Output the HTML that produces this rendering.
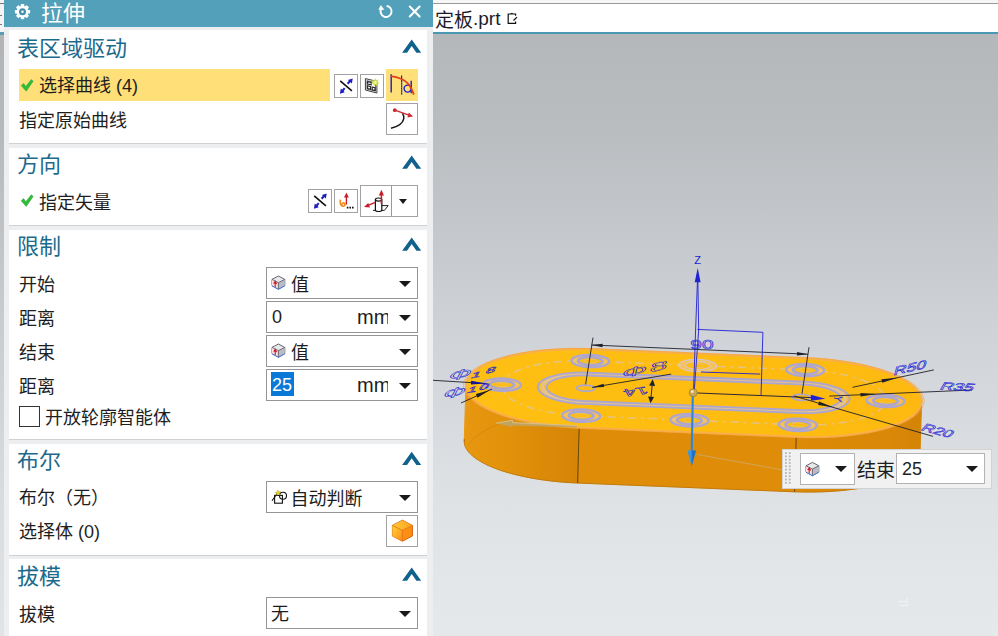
<!DOCTYPE html>
<html lang="zh-CN">
<head>
<meta charset="utf-8">
<title>拉伸</title>
<style>
html,body{margin:0;padding:0;}
body{width:998px;height:636px;overflow:hidden;position:relative;background:#eceff2;
 font-family:"Liberation Sans","Noto Sans CJK SC",sans-serif;color:#1c1c1c;font-size:18px;}
.abs{position:absolute;}
/* left sliver of underlying window */
#sliverTop{left:0;top:0;width:4px;height:32px;background:#f4f4f4;}
#sliverLine{left:0;top:32px;width:4px;height:3px;background:#5a9bb5;}
#sliver{left:0;top:35px;width:4px;height:601px;background:linear-gradient(#b2b4b6 0%,#b5b8ba 14%,#cacdd0 49%,#d9dcdf 77%,#e1e4e6 100%);}
/* dialog */
#dlg{left:4px;top:0;width:429px;height:636px;background:#eceef0;}
#title{left:4px;top:0;width:429px;height:26.5px;background:#53a0ba;color:#fff;}
#title .t{left:37px;top:-2px;font-size:22px;line-height:32px;white-space:nowrap;}
.card{left:9px;width:418px;background:#fff;box-shadow:0 1px 0 #cfd2d5;}
.hd{left:17px;font-size:22px;line-height:30px;color:#1c6a8c;white-space:nowrap;}
.lbl{left:19px;font-size:18px;line-height:26px;white-space:nowrap;color:#1e1e1e;}
.box{left:266px;width:150px;height:30px;border:1px solid #959595;background:#fff;}
.box .v{position:absolute;left:5px;top:2px;font-size:18px;line-height:26px;white-space:nowrap;}
.tri{position:absolute;width:0;height:0;border-left:6px solid transparent;border-right:6px solid transparent;border-top:6px solid #1a1a1a;}
.btn{border:1px solid #a2a2a2;background:#fff;box-sizing:border-box;}
svg{position:absolute;overflow:visible;}
/* viewport */
#tab{left:433px;top:0;width:565px;height:32px;background:#fff;}
#tabTop{left:433px;top:0;width:565px;height:3px;background:#f6f6f6;border-bottom:1px solid #9a9a9a;}
#tabLine{left:433px;top:32px;width:565px;height:2px;background:#4a98b3;}
#tab .t{left:2px;top:5px;font-size:19px;line-height:28px;color:#1b1b2b;white-space:nowrap;}
#view{left:433px;top:34px;width:565px;height:602px;background:linear-gradient(#b5b8ba 0%,#b8bcbf 14%,#cfd2d6 49%,#dee2e5 77%,#e6e9ec 100%);}
</style>
</head>
<body>
<div id="dlg" class="abs"></div>
<div id="sliverTop" class="abs"><div class="abs" style="left:0;top:3px;width:4px;height:1px;background:#777"></div><div class="abs" style="left:0;top:15px;width:2px;height:1px;background:#777"></div><div class="abs" style="left:0;top:24px;width:2px;height:1px;background:#777"></div></div><div id="sliverLine" class="abs"></div><div id="sliver" class="abs"></div>

<!-- title bar -->
<div id="title" class="abs">
 <svg style="left:10px;top:3px" width="17" height="17" viewBox="-8.5 -8.7 17 17">
  <g fill="#fff"><circle r="5.9"/>
  <rect x="-1.8" y="-7.6" width="3.6" height="15.2" rx="0.7"/>
  <rect x="-1.8" y="-7.6" width="3.6" height="15.2" rx="0.7" transform="rotate(45)"/>
  <rect x="-1.8" y="-7.6" width="3.6" height="15.2" rx="0.7" transform="rotate(90)"/>
  <rect x="-1.8" y="-7.6" width="3.6" height="15.2" rx="0.7" transform="rotate(135)"/></g>
  <circle r="3.5" fill="#4391aa"/><circle r="1.2" fill="#fff"/>
 </svg>
 <div class="abs t">拉伸</div>
 <svg style="left:0;top:0" width="429" height="27" viewBox="4 0 429 27">
  <path d="M381.4,8.6 A5.5,5.5 0 1 0 386.6,6" fill="none" stroke="#fff" stroke-width="1.9"/>
  <path d="M378.4,9.8 L380.8,5 L384.4,9.8 Z" fill="#fff"/>
  <path d="M409.8,6.6 L419.6,16.4 M419.6,6.6 L409.8,16.4" stroke="#fff" stroke-width="2.1" fill="none" stroke-linecap="round"/>
 </svg>
</div>

<!-- SECTION 1 -->
<div class="abs card" style="top:30px;height:113px"></div>
<div class="abs hd" style="top:34px">表区域驱动</div>
<div class="abs" style="left:19px;top:69px;width:311px;height:32px;background:#fedf78"></div>
<div class="abs lbl" style="left:39px;top:73px">选择曲线 (4)</div>
<div class="abs lbl" style="top:108px">指定原始曲线</div>
<div class="abs btn" style="left:334px;top:74px;width:24px;height:24px"></div>
<div class="abs btn" style="left:360px;top:74px;width:24px;height:24px"></div>
<div class="abs" style="left:386px;top:69px;width:32px;height:32px;background:#fedf78"></div>
<div class="abs btn" style="left:386px;top:103px;width:32px;height:32px"></div>

<!-- SECTION 2 -->
<div class="abs card" style="top:148px;height:77px"></div>
<div class="abs hd" style="top:150px">方向</div>
<div class="abs lbl" style="left:39px;top:190px">指定矢量</div>
<div class="abs btn" style="left:308px;top:189px;width:24px;height:24px"></div>
<div class="abs btn" style="left:334px;top:189px;width:24px;height:24px"></div>
<div class="abs btn" style="left:360px;top:185px;width:58px;height:32px"></div>
<div class="abs" style="left:391px;top:185px;width:1px;height:32px;background:#9a9a9a"></div>
<div class="tri" style="left:399px;top:199px;border-left-width:4.5px;border-right-width:4.5px;border-top-width:5px"></div>

<!-- SECTION 3 -->
<div class="abs card" style="top:230px;height:209px"></div>
<div class="abs hd" style="top:232px">限制</div>
<div class="abs lbl" style="top:272px">开始</div>
<div class="abs lbl" style="top:306px">距离</div>
<div class="abs lbl" style="top:340px">结束</div>
<div class="abs lbl" style="top:374px">距离</div>
<div class="abs box" style="top:267px"><div class="v" style="left:24px;top:4px">值</div><div class="tri" style="left:132px;top:13px"></div></div>
<div class="abs box" style="top:301px"><div class="v">0</div><div class="v" style="left:90px;width:30.5px;overflow:hidden;font-size:20px">mm</div><div class="tri" style="left:132px;top:13px"></div></div>
<div class="abs box" style="top:335px"><div class="v" style="left:24px;top:4px">值</div><div class="tri" style="left:132px;top:13px"></div></div>
<div class="abs box" style="top:369px"><div class="abs" style="left:4px;top:2px;width:23px;height:23.5px;background:#0a78d6"></div><div class="v" style="color:#fff">25</div><div class="v" style="left:90px;width:30.5px;overflow:hidden;font-size:20px">mm</div><div class="tri" style="left:132px;top:13px"></div></div>
<div class="abs" style="left:19px;top:406px;width:19px;height:19px;border:1.5px solid #333;background:#fff"></div>
<div class="abs lbl" style="left:45px;top:405px">开放轮廓智能体</div>

<!-- SECTION 4 -->
<div class="abs card" style="top:444px;height:111px"></div>
<div class="abs hd" style="top:446px">布尔</div>
<div class="abs lbl" style="top:485px">布尔（无）</div>
<div class="abs lbl" style="top:519px">选择体 (0)</div>
<div class="abs box" style="top:481px"><div class="v" style="left:23.5px;top:4px">自动判断</div><div class="tri" style="left:132px;top:13px"></div></div>
<div class="abs btn" style="left:386px;top:515px;width:32px;height:32px"></div>

<!-- SECTION 5 -->
<div class="abs card" style="top:559px;height:90px"></div>
<div class="abs hd" style="top:562px">拔模</div>
<div class="abs lbl" style="top:602px">拔模</div>
<div class="abs box" style="top:597px"><div class="v" style="left:4px;top:3px">无</div><div class="tri" style="left:132px;top:13px"></div></div>


<!-- ICONS -->
<svg class="abs" style="left:0;top:0" width="433" height="636" viewBox="0 0 433 636">
 <!-- check marks -->
 <path id="ck" d="M21.2,85.6 L23.6,83.4 L25.8,86.6 L31.2,79.6 L33.2,81.2 L26.2,91.2 Z" fill="#2fbe3a" stroke="#27a531" stroke-width="0.5"/>
 <path d="M21.2,200.8 L23.6,198.6 L25.8,201.8 L31.2,194.8 L33.2,196.4 L26.2,206.4 Z" fill="#2fbe3a" stroke="#27a531" stroke-width="0.5"/>
 <!-- chevrons -->
 <g fill="#11628a">
  <path d="M402.1,52.8 L411.7,39.6 L421.2,52.8 L416.4,52.8 L411.7,46.0 L407,52.8 Z"/>
  <path d="M402.1,168.8 L411.7,155.6 L421.2,168.8 L416.4,168.8 L411.7,162.0 L407,168.8 Z"/>
  <path d="M402.1,250.8 L411.7,237.6 L421.2,250.8 L416.4,250.8 L411.7,244.0 L407,250.8 Z"/>
  <path d="M402.1,465.0 L411.7,451.8 L421.2,465.0 L416.4,465.0 L411.7,458.2 L407,465.0 Z"/>
  <path d="M402.1,580.8 L411.7,567.6 L421.2,580.8 L416.4,580.8 L411.7,574.0 L407,580.8 Z"/>
 </g>
 <!-- reverse-direction icon (x2) -->
 <g>
  <path d="M340.2,80.8 L351.9,90.8" stroke="#111" stroke-width="1.6" fill="none"/>
  <path d="M347.6,83.7 L350.6,80.5 M344.7,88.2 L342,91.4" stroke="#1c1cc0" stroke-width="2" fill="none"/>
  <path d="M352.7,78.4 L351.9,83.6 L347.9,80 Z M339.9,93.8 L340.8,88.5 L344.8,92.2 Z" fill="#1c1cc0"/>
 </g>
 <g transform="translate(-26,115)">
  <path d="M340.2,80.8 L351.9,90.8" stroke="#111" stroke-width="1.6" fill="none"/>
  <path d="M347.6,83.7 L350.6,80.5 M344.7,88.2 L342,91.4" stroke="#1c1cc0" stroke-width="2" fill="none"/>
  <path d="M352.7,78.4 L351.9,83.6 L347.9,80 Z M339.9,93.8 L340.8,88.5 L344.8,92.2 Z" fill="#1c1cc0"/>
 </g>
 <!-- sketch section icon -->
 <g fill="none" stroke="#3c3c3c" stroke-width="1">
  <path d="M365.4,78.6 L376.9,81.4 L376.9,93 L365.4,90 Z"/>
  <path d="M366.9,80.6 L375.5,82.8 L375.5,91.2 L366.9,89 Z" stroke-width="0.7"/>
  <path d="M367.6,81.6 L371.2,82.4 L371.2,84.8 L367.6,84 Z M367.6,85.8 L370.6,86.6 L370.6,89.4 L367.6,88.6 Z M372.2,87 L375,87.7 L375,90.5 L372.2,89.8 Z" stroke-width="1.1" stroke="#222"/>
 </g>
 <path d="M375.2,78.4 L376.1,80.6 L378.4,79.8 L377.2,81.9 L379.3,83.1 L377,83.6 L377.3,86 L375.4,84.4 L373.6,86.1 L373.6,83.7 L371.3,83.3 L373.2,81.9 L372,79.9 L374.3,80.6 Z" fill="#d4e64e" stroke="#b4cc30" stroke-width="0.3"/>
 <circle cx="375.3" cy="82.4" r="1.4" fill="#f6f8a0"/>
 <!-- curve select icon (yellow) -->
 <g fill="none">
  <path d="M391.2,74.2 L391.2,92.6" stroke="#1c1cc8" stroke-width="1.4"/>
  <path d="M401.6,75.6 L401.6,94.8" stroke="#1c1cc8" stroke-width="1.2"/>
  <path d="M401.6,82 L401.6,95" stroke="#38c020" stroke-width="1" stroke-dasharray="1.2 1.2"/>
  <circle cx="407.6" cy="88.6" r="3.5" stroke="#1c1cc8" stroke-width="1.4"/>
  <path d="M411.2,80.8 L411.2,93.2" stroke="#1c1cc8" stroke-width="1.4"/>
  <path d="M390.6,76.2 C398,77.2 404,79.4 408,83.6 C410.8,86.6 412.4,90.4 413.8,94.6" stroke="#e0401c" stroke-width="1.8"/>
 </g>
 <!-- specify original curve icon -->
 <g fill="none">
  <path d="M391,128.2 C398,126.6 402.8,123.4 403.8,118.6 C404.2,116.6 403.4,114.8 402.4,113.4" stroke="#151515" stroke-width="1.5"/>
  <path d="M394.8,110.2 L409,115.2" stroke="#d22630" stroke-width="1.4"/>
  <circle cx="394.8" cy="110.2" r="1.9" fill="#d22630"/>
  <path d="M413,116.6 L407.4,117.4 L408.8,112.6 Z" fill="#d22630"/>
 </g>
 <!-- vector dialog icon -->
 <g fill="none">
  <path d="M346.4,204.6 L346.4,196" stroke="#c81e28" stroke-width="1.4"/>
  <path d="M346.4,192.6 L348.8,197.4 L344,197.4 Z" fill="#c81e28"/>
  <path d="M340.4,199.6 C339.6,203.6 341,206.2 343.2,206.2 C345.2,206.2 345.6,203.6 344,203 C342.8,202.6 342,203.6 342.4,204.6" stroke="#f08a1c" stroke-width="1.7"/>
  <path d="M346.8,207.6 h1.6 M349.4,207.6 h1.6 M352,207.6 h1.6" stroke="#111" stroke-width="1.7"/>
 </g>
 <!-- inferred vector icon -->
 <g fill="none">
  <path d="M373,210.4 L384.4,210.4 L388.2,205.6 L381.6,205.6" stroke="#222" stroke-width="1"/>
  <path d="M375.4,199.6 L375.4,210 C375.4,212 381.8,212 381.8,210 L381.8,199.6" stroke="#111" stroke-width="1.2" fill="#fff"/>
  <ellipse cx="378.6" cy="199.6" rx="3.2" ry="1.6" stroke="#111" stroke-width="1.2" fill="#fff"/>
  <path d="M381.4,204 L381.4,194" stroke="#c81e28" stroke-width="1.5"/>
  <path d="M381.4,189.8 L384,195.4 L378.8,195.4 Z" fill="#c81e28"/>
  <path d="M375.4,202.4 L368,205.4" stroke="#c81e28" stroke-width="1.5"/>
  <path d="M364,207 L368.2,203 L370,207.4 Z" fill="#c81e28"/>
 </g>
 <!-- value cube icons -->
 <g id="vcube">
  <path d="M272,279.4 L278.4,276 L284.8,279.4 L284.8,285.6 L278.4,289 L272,285.6 Z" fill="#e9e9ec" stroke="#55555f" stroke-width="0.9"/>
  <path d="M272,279.4 L278.4,282.6 L278.4,289 L272,285.6 Z" fill="#f7dfe2"/>
  <path d="M278.4,282.6 L284.8,279.4 L284.8,285.6 L278.4,289 Z" fill="#b9bcc4"/>
  <path d="M272,279.4 L278.4,282.6 L284.8,279.4 M278.4,282.6 L278.4,289" fill="none" stroke="#55555f" stroke-width="0.8"/>
  <path d="M275.2,287 L275.2,281.6 M273.8,283.6 L275.2,281.4 L276.6,284" stroke="#d01822" stroke-width="1.1" fill="none"/>
  <path d="M272,285.8 L278.4,289.4 L284.8,285.8" stroke="#3f78d0" stroke-width="1" fill="none"/>
 </g>
 <g transform="translate(0,68)">
  <path d="M272,279.4 L278.4,276 L284.8,279.4 L284.8,285.6 L278.4,289 L272,285.6 Z" fill="#e9e9ec" stroke="#55555f" stroke-width="0.9"/>
  <path d="M272,279.4 L278.4,282.6 L278.4,289 L272,285.6 Z" fill="#f7dfe2"/>
  <path d="M278.4,282.6 L284.8,279.4 L284.8,285.6 L278.4,289 Z" fill="#b9bcc4"/>
  <path d="M272,279.4 L278.4,282.6 L284.8,279.4 M278.4,282.6 L278.4,289" fill="none" stroke="#55555f" stroke-width="0.8"/>
  <path d="M275.2,287 L275.2,281.6 M273.8,283.6 L275.2,281.4 L276.6,284" stroke="#d01822" stroke-width="1.1" fill="none"/>
  <path d="M272,285.8 L278.4,289.4 L284.8,285.8" stroke="#3f78d0" stroke-width="1" fill="none"/>
 </g>
 <!-- boolean infer icon -->
 <g fill="none" stroke="#111" stroke-width="1.1">
  <rect x="274.6" y="495.4" width="7.8" height="7.8"/>
  <circle cx="283" cy="495.8" r="3.5"/>
  <path d="M272,500.8 L277.6,493"/>
 </g>
 <path d="M277.8,489.8 L278.6,491.8 L280.8,491.6 L279.2,493.2 L280.2,495.2 L278.2,494.2 L276.6,495.6 L276.8,493.4 L275,492.2 L277.2,491.8 Z" fill="#e8d21e" stroke="#a89a10" stroke-width="0.3"/>
 <!-- body cube -->
 <defs>
  <linearGradient id="cbL" x1="0" y1="0" x2="1" y2="1"><stop offset="0" stop-color="#ffd53a"/><stop offset="1" stop-color="#fb8a12"/></linearGradient>
  <linearGradient id="cbT" x1="0" y1="0" x2="1" y2="0"><stop offset="0" stop-color="#ffc83a"/><stop offset="1" stop-color="#ffa51e"/></linearGradient>
 </defs>
 <path d="M392.4,525.4 L402.4,520.2 L412.4,525.4 L412.4,536 L402.4,541.2 L392.4,536 Z" fill="#fb8f12" stroke="#d9601a" stroke-width="1" stroke-linejoin="round"/>
 <path d="M392.4,525.4 L402.4,520.2 L412.4,525.4 L402.4,530.4 Z" fill="url(#cbT)"/>
 <path d="M392.4,525.4 L402.4,530.4 L402.4,541.2 L392.4,536 Z" fill="url(#cbL)"/>
 <path d="M392.4,525.4 L402.4,530.4 L412.4,525.4 M402.4,530.4 L402.4,541.2" fill="none" stroke="#e2701a" stroke-width="0.8"/>
</svg>

<!-- VIEWPORT -->
<div id="view" class="abs"></div>
<div id="tab" class="abs"><div class="abs t"><span style="position:relative;top:1.5px">定板</span>.prt</div></div>
<div id="tabTop" class="abs"></div>
<svg class="abs" style="left:505px;top:10px" width="16" height="16" viewBox="505 10 16 16">
 <path d="M515.6,15.8 V14 H508.2 V23.4 H515.6 V21.4" fill="none" stroke="#111" stroke-width="1.2"/>
 <path d="M510.2,13.9 L511.8,12.7 L513.4,13.9 Z" fill="#111"/>
 <path d="M517,17.1 L513.5,20.5" stroke="#111" stroke-width="1.3" fill="none"/>
</svg>
<div id="tabLine" class="abs"></div>

<svg class="abs" style="left:0;top:0" width="998" height="636" viewBox="0 0 998 636">
<defs>
<linearGradient id="gside" gradientUnits="userSpaceOnUse" x1="464" y1="0" x2="922" y2="0">
<stop offset="0" stop-color="#ea9a12"/><stop offset="0.02" stop-color="#e6950e"/><stop offset="0.10" stop-color="#e2910b"/><stop offset="0.19" stop-color="#da8908"/><stop offset="0.2505" stop-color="#d58506"/>
<stop offset="0.2515" stop-color="#df8d09"/><stop offset="0.723" stop-color="#df8d09"/><stop offset="0.725" stop-color="#dc8a08"/><stop offset="0.93" stop-color="#d98807"/><stop offset="1" stop-color="#d48406"/>
</linearGradient>
<linearGradient id="gtop" gradientUnits="userSpaceOnUse" x1="464" y1="0" x2="922" y2="0">
<stop offset="0" stop-color="#fec013"/><stop offset="0.5" stop-color="#febd10"/><stop offset="1" stop-color="#fdb910"/>
</linearGradient>
<clipPath id="cview"><rect x="433" y="34" width="565" height="602"/></clipPath>
</defs>
<g clip-path="url(#cview)">
<path d="M794.6,491.8 L804.1,492.0 L813.5,492.0 L822.9,491.8 L832.1,491.3 L841.2,490.6 L849.9,489.6 L858.4,488.5 L866.5,487.0 L874.2,485.4 L881.4,483.6 L888.1,481.6 L894.2,479.4 L899.8,477.0 L904.7,474.5 L909.0,471.9 L912.6,469.1 L915.5,466.2 L917.7,463.3 L919.2,460.3 L919.9,457.2 L919.9,454.1 L919.2,451.0 L917.7,447.9 L915.5,444.9 L912.6,441.9 L909.0,438.9 L904.7,436.1 L899.8,433.3 L894.2,430.7 L888.1,428.2 L881.5,425.9 L874.4,423.7 L866.8,421.7 L858.8,419.9 L850.4,418.3 L841.8,416.8 L832.8,415.7 L823.7,414.7 L814.5,414.0 L805.1,413.5 L590.6,404.9 L581.2,404.7 L571.9,404.7 L562.6,404.9 L553.5,405.4 L544.5,406.1 L535.8,407.0 L527.4,408.2 L519.3,409.5 L511.6,411.1 L504.4,412.9 L497.6,414.9 L491.4,417.0 L485.7,419.4 L480.7,421.8 L476.2,424.4 L472.5,427.2 L469.4,430.0 L467.0,432.9 L465.3,435.9 L464.4,439.0 L464.2,442.1 L464.7,445.1 L466.0,448.2 L468.0,451.3 L470.8,454.3 L474.2,457.3 L478.3,460.1 L483.1,462.9 L488.5,465.6 L494.5,468.1 L501.0,470.5 L508.1,472.7 L515.7,474.7 L523.6,476.5 L532.0,478.2 L540.7,479.6 L549.6,480.8 L558.8,481.8 L568.1,482.5 L577.6,483.0 Z" fill="url(#gside)" stroke="url(#gside)" stroke-width="1"/>
<path d="M465.9,386.3 L921.6,402.4 L919.9,457.2 L464.2,442.1 Z" fill="url(#gside)" stroke="url(#gside)" stroke-width="1"/>
<path d="M796.2,436.7 L805.7,437.0 L815.2,437.0 L824.6,436.8 L833.8,436.3 L842.8,435.6 L851.6,434.7 L860.0,433.5 L868.1,432.1 L875.8,430.5 L883.0,428.7 L889.7,426.7 L895.9,424.5 L901.4,422.2 L906.4,419.7 L910.7,417.0 L914.3,414.3 L917.2,411.4 L919.4,408.5 L920.9,405.5 L921.6,402.4 L921.6,399.3 L920.8,396.2 L919.3,393.1 L917.1,390.1 L914.2,387.1 L910.6,384.1 L906.3,381.2 L901.4,378.5 L895.9,375.8 L889.8,373.3 L883.1,371.0 L876.0,368.8 L868.4,366.8 L860.4,364.9 L852.1,363.3 L843.4,361.9 L834.5,360.7 L825.4,359.7 L816.1,358.9 L806.8,358.4 L592.2,349.4 L582.9,349.1 L573.5,349.1 L564.3,349.3 L555.1,349.8 L546.2,350.4 L537.5,351.4 L529.0,352.5 L521.0,353.9 L513.3,355.4 L506.0,357.2 L499.3,359.2 L493.1,361.3 L487.4,363.6 L482.3,366.1 L477.9,368.7 L474.1,371.4 L471.0,374.2 L468.7,377.2 L467.0,380.1 L466.1,383.2 L465.9,386.3 L466.4,389.3 L467.7,392.4 L469.7,395.5 L472.4,398.5 L475.9,401.5 L480.0,404.4 L484.8,407.1 L490.2,409.8 L496.1,412.3 L502.7,414.7 L509.8,417.0 L517.3,419.0 L525.3,420.9 L533.7,422.5 L542.3,424.0 L551.3,425.2 L560.5,426.2 L569.8,427.0 L579.2,427.5 Z" fill="url(#gside)" stroke="url(#gside)" stroke-width="1"/>
<path d="M464.2,442.1 L464.4,439.0 L464.7,445.1 L466.0,448.2 L468.0,451.3 L470.8,454.3 L474.2,457.3 L478.3,460.1 L483.1,462.9 L488.5,465.6 L494.5,468.1 L501.0,470.5 L508.1,472.7 L515.7,474.7 L523.6,476.5 L532.0,478.2 L540.7,479.6 L549.6,480.8 L558.8,481.8 L568.1,482.5 L577.6,483.0 L794.6,491.8 L804.1,492.0 L813.5,492.0 L822.9,491.8 L832.1,491.3 L841.2,490.6 L849.9,489.6 L858.4,488.5 L866.5,487.0 L874.2,485.4 L881.4,483.6 L888.1,481.6 L894.2,479.4 L899.8,477.0 L904.7,474.5 L909.0,471.9 L912.6,469.1 L915.5,466.2 L917.7,463.3 L919.2,460.3 L919.9,457.2" fill="none" stroke="#a8690a" stroke-width="0.9" opacity="0.55"/>
<path d="M468,446 C480,425 520,415 579,410" fill="none" stroke="#c47a08" stroke-width="0.8" opacity="0.5"/>
<path d="M579.2,427.5 L577.6,483.0 M796.2,436.7 L794.6,491.8" stroke="#5a3e0c" stroke-width="0.9" fill="none"/>
<path d="M796.2,436.7 L805.7,437.0 L815.2,437.0 L824.6,436.8 L833.8,436.3 L842.8,435.6 L851.6,434.7 L860.0,433.5 L868.1,432.1 L875.8,430.5 L883.0,428.7 L889.7,426.7 L895.9,424.5 L901.4,422.2 L906.4,419.7 L910.7,417.0 L914.3,414.3 L917.2,411.4 L919.4,408.5 L920.9,405.5 L921.6,402.4 L921.6,399.3 L920.8,396.2 L919.3,393.1 L917.1,390.1 L914.2,387.1 L910.6,384.1 L906.3,381.2 L901.4,378.5 L895.9,375.8 L889.8,373.3 L883.1,371.0 L876.0,368.8 L868.4,366.8 L860.4,364.9 L852.1,363.3 L843.4,361.9 L834.5,360.7 L825.4,359.7 L816.1,358.9 L806.8,358.4 L592.2,349.4 L582.9,349.1 L573.5,349.1 L564.3,349.3 L555.1,349.8 L546.2,350.4 L537.5,351.4 L529.0,352.5 L521.0,353.9 L513.3,355.4 L506.0,357.2 L499.3,359.2 L493.1,361.3 L487.4,363.6 L482.3,366.1 L477.9,368.7 L474.1,371.4 L471.0,374.2 L468.7,377.2 L467.0,380.1 L466.1,383.2 L465.9,386.3 L466.4,389.3 L467.7,392.4 L469.7,395.5 L472.4,398.5 L475.9,401.5 L480.0,404.4 L484.8,407.1 L490.2,409.8 L496.1,412.3 L502.7,414.7 L509.8,417.0 L517.3,419.0 L525.3,420.9 L533.7,422.5 L542.3,424.0 L551.3,425.2 L560.5,426.2 L569.8,427.0 L579.2,427.5 Z" fill="url(#gtop)" stroke="#f9b04a" stroke-width="2.2"/>
<path d="M796.1,437.5 L805.8,437.8 L815.5,437.8 L825.0,437.6 L834.4,437.1 L843.6,436.4 L852.6,435.4 L861.2,434.2 L869.5,432.8 L877.3,431.2 L884.7,429.3 L891.5,427.3 L897.8,425.1 L903.4,422.7 L908.5,420.1 L912.9,417.4 L916.5,414.6 L919.5,411.7 L921.8,408.7 L923.2,405.6 L924.0,402.5 L924.0,399.3 L923.2,396.2 L921.7,393.0 L919.4,389.9 L916.5,386.8 L912.8,383.8 L908.4,380.9 L903.4,378.1 L897.8,375.4 L891.5,372.9 L884.8,370.5 L877.5,368.2 L869.7,366.2 L861.6,364.3 L853.1,362.6 L844.2,361.2 L835.1,359.9 L825.9,358.9 L816.4,358.2 L806.9,357.7 L592.4,348.6 L582.8,348.4 L573.3,348.3 L563.8,348.5 L554.5,349.0 L545.4,349.7 L536.5,350.6 L527.9,351.8 L519.7,353.2 L511.8,354.8 L504.4,356.6 L497.6,358.6 L491.2,360.8 L485.4,363.1 L480.3,365.6 L475.7,368.3 L471.9,371.1 L468.8,374.0 L466.3,376.9 L464.6,380.0 L463.7,383.1 L463.5,386.2 L464.0,389.4 L465.3,392.5 L467.4,395.6 L470.2,398.7 L473.7,401.7 L477.9,404.7 L482.7,407.5 L488.2,410.2 L494.4,412.8 L501.0,415.3 L508.3,417.5 L516.0,419.6 L524.1,421.5 L532.6,423.2 L541.5,424.7 L550.6,425.9 L560.0,427.0 L569.5,427.7 L579.1,428.3 Z" fill="none" stroke="#f6a43a" stroke-width="0.8" opacity="0.8"/>
<g fill="none" stroke="#aca6d0" stroke-width="1.9" stroke-linejoin="round">
<path d="M799.6,411.5 L803.0,411.6 L806.5,411.6 L809.8,411.6 L813.2,411.4 L816.4,411.1 L819.6,410.8 L822.6,410.4 L825.6,409.9 L828.3,409.3 L830.9,408.7 L833.4,407.9 L835.6,407.2 L837.6,406.3 L839.4,405.4 L841.0,404.4 L842.3,403.5 L843.4,402.4 L844.2,401.4 L844.7,400.3 L845.0,399.2 L845.0,398.0 L844.7,396.9 L844.2,395.8 L843.4,394.7 L842.4,393.6 L841.1,392.5 L839.5,391.5 L837.8,390.5 L835.8,389.5 L833.6,388.6 L831.2,387.8 L828.6,387.0 L825.8,386.2 L822.9,385.6 L819.9,385.0 L816.7,384.5 L813.5,384.0 L810.2,383.7 L806.8,383.4 L803.4,383.2 L588.1,374.1 L584.7,374.0 L581.3,374.0 L578.0,374.1 L574.6,374.3 L571.4,374.5 L568.2,374.8 L565.2,375.3 L562.2,375.7 L559.4,376.3 L556.8,377.0 L554.4,377.7 L552.1,378.5 L550.1,379.3 L548.2,380.2 L546.7,381.1 L545.3,382.1 L544.2,383.2 L543.3,384.2 L542.7,385.3 L542.4,386.4 L542.4,387.5 L542.6,388.6 L543.0,389.8 L543.8,390.9 L544.8,391.9 L546.0,393.0 L547.5,394.1 L549.3,395.1 L551.2,396.0 L553.4,396.9 L555.8,397.8 L558.3,398.6 L561.1,399.3 L563.9,400.0 L567.0,400.6 L570.1,401.1 L573.3,401.6 L576.6,401.9 L580.0,402.2 L583.4,402.4 Z" stroke="#d9c6c0" stroke-width="3.6" opacity="0.7"/>
<path d="M799.4,413.0 L803.2,413.1 L807.0,413.1 L810.7,413.1 L814.4,412.9 L818.0,412.6 L821.5,412.2 L824.9,411.8 L828.1,411.2 L831.2,410.6 L834.0,409.8 L836.7,409.1 L839.2,408.2 L841.4,407.2 L843.4,406.2 L845.1,405.2 L846.6,404.1 L847.7,403.0 L848.6,401.8 L849.2,400.6 L849.5,399.4 L849.6,398.1 L849.3,396.9 L848.7,395.6 L847.8,394.4 L846.7,393.2 L845.2,392.0 L843.5,390.9 L841.6,389.8 L839.4,388.7 L836.9,387.7 L834.3,386.8 L831.4,385.9 L828.4,385.1 L825.2,384.3 L821.8,383.7 L818.3,383.1 L814.8,382.6 L811.1,382.2 L807.4,381.9 L803.6,381.7 L588.4,372.7 L584.6,372.5 L580.9,372.5 L577.1,372.6 L573.5,372.8 L569.9,373.1 L566.4,373.4 L563.0,373.9 L559.8,374.4 L556.7,375.1 L553.8,375.8 L551.1,376.6 L548.6,377.4 L546.3,378.4 L544.3,379.4 L542.5,380.4 L541.1,381.5 L539.8,382.6 L538.9,383.8 L538.2,385.0 L537.9,386.2 L537.8,387.4 L538.0,388.7 L538.6,389.9 L539.4,391.1 L540.5,392.3 L541.9,393.5 L543.5,394.7 L545.4,395.8 L547.6,396.8 L550.0,397.9 L552.6,398.8 L555.4,399.7 L558.5,400.5 L561.7,401.2 L565.0,401.9 L568.4,402.5 L572.0,403.0 L575.7,403.4 L579.4,403.7 L583.2,403.9 Z"/>
<path d="M799.8,410.1 L802.9,410.2 L806.0,410.2 L809.0,410.1 L812.0,410.0 L814.9,409.8 L817.8,409.5 L820.5,409.1 L823.2,408.6 L825.7,408.1 L828.0,407.5 L830.2,406.9 L832.2,406.2 L834.0,405.4 L835.6,404.6 L837.1,403.7 L838.2,402.8 L839.2,401.9 L839.9,401.0 L840.4,400.0 L840.7,399.0 L840.7,398.0 L840.4,397.0 L840.0,396.0 L839.3,395.0 L838.3,394.0 L837.1,393.0 L835.8,392.1 L834.2,391.2 L832.4,390.3 L830.4,389.5 L828.2,388.7 L825.9,388.0 L823.4,387.3 L820.8,386.7 L818.1,386.2 L815.2,385.7 L812.3,385.3 L809.3,385.0 L806.3,384.8 L803.3,384.6 L587.9,375.5 L584.8,375.4 L581.8,375.4 L578.7,375.5 L575.7,375.6 L572.8,375.9 L570.0,376.2 L567.2,376.5 L564.6,377.0 L562.1,377.5 L559.7,378.1 L557.5,378.7 L555.5,379.4 L553.6,380.2 L552.0,381.0 L550.5,381.8 L549.3,382.7 L548.3,383.7 L547.6,384.6 L547.0,385.6 L546.7,386.6 L546.7,387.6 L546.9,388.6 L547.3,389.6 L548.0,390.6 L548.9,391.6 L550.0,392.5 L551.3,393.5 L552.9,394.4 L554.7,395.2 L556.6,396.1 L558.8,396.8 L561.1,397.6 L563.5,398.2 L566.1,398.8 L568.8,399.4 L571.7,399.8 L574.6,400.2 L577.5,400.6 L580.6,400.8 L583.6,401.0 Z"/>
<path d="M797.8,424.8 L804.5,425.0 L811.1,425.0 L817.6,424.9 L824.1,424.6 L830.4,424.1 L836.5,423.4 L842.4,422.6 L848.1,421.7 L853.5,420.5 L858.5,419.3 L863.2,417.9 L867.5,416.3 L871.4,414.7 L874.9,413.0 L877.9,411.1 L880.4,409.2 L882.5,407.2 L884.0,405.1 L885.0,403.0 L885.6,400.9 L885.6,398.7 L885.0,396.5 L884.0,394.4 L882.5,392.2 L880.5,390.1 L877.9,388.1 L874.9,386.1 L871.5,384.1 L867.6,382.3 L863.4,380.5 L858.7,378.9 L853.7,377.3 L848.4,375.9 L842.8,374.6 L837.0,373.5 L830.9,372.5 L824.6,371.6 L818.3,370.9 L811.8,370.4 L805.2,370.1 L590.3,361.0 L583.7,360.8 L577.2,360.8 L570.7,360.9 L564.3,361.3 L558.0,361.7 L551.9,362.4 L546.0,363.2 L540.3,364.1 L535.0,365.2 L529.9,366.5 L525.2,367.9 L520.8,369.4 L516.8,371.0 L513.3,372.7 L510.2,374.5 L507.6,376.4 L505.4,378.4 L503.8,380.5 L502.6,382.6 L502.0,384.7 L501.8,386.8 L502.2,389.0 L503.1,391.2 L504.6,393.3 L506.5,395.4 L508.9,397.5 L511.8,399.5 L515.1,401.5 L518.9,403.3 L523.1,405.1 L527.7,406.8 L532.6,408.3 L537.9,409.7 L543.5,411.0 L549.3,412.2 L555.4,413.2 L561.7,414.1 L568.1,414.8 L574.6,415.3 L581.2,415.7 Z" stroke-dasharray="8 5 2.5 5" stroke="#d9c8b4" stroke-width="1.5" opacity="0.7"/>
<path d="M609.2,361.8 L609.0,360.6 L608.1,359.4 L606.5,358.3 L604.3,357.3 L601.6,356.4 L598.5,355.7 L595.0,355.2 L591.3,354.9 L587.6,354.9 L584.0,355.1 L580.7,355.5 L577.7,356.1 L575.2,357.0 L573.3,357.9 L572.0,359.0 L571.5,360.2 L571.6,361.4 L572.5,362.6 L574.1,363.8 L576.2,364.8 L579.0,365.7 L582.1,366.4 L585.6,366.9 L589.3,367.1 L593.0,367.2 L596.6,367.0 L599.9,366.5 L602.9,365.9 L605.4,365.1 L607.3,364.1 L608.6,363.0 Z" fill="#f3c48a" fill-opacity="0.55" stroke="#aca6d0" stroke-width="2.3"/>
<path d="M602.5,361.5 L602.4,360.7 L601.8,360.0 L600.8,359.2 L599.4,358.6 L597.6,358.0 L595.6,357.6 L593.3,357.2 L591.0,357.1 L588.6,357.0 L586.3,357.2 L584.1,357.5 L582.2,357.9 L580.6,358.4 L579.3,359.0 L578.5,359.7 L578.1,360.5 L578.2,361.3 L578.8,362.1 L579.8,362.8 L581.2,363.4 L583.0,364.0 L585.0,364.5 L587.3,364.8 L589.6,365.0 L592.0,365.0 L594.4,364.9 L596.5,364.6 L598.4,364.2 L600.1,363.6 L601.3,363.0 L602.1,362.3 Z" fill="#febd10" stroke="#aca6d0" stroke-width="2.6"/>
<path d="M596.5,361.3 L596.5,360.9 L596.2,360.5 L595.6,360.1 L594.9,359.8 L594.0,359.5 L593.0,359.3 L591.8,359.1 L590.6,359.0 L589.4,359.0 L588.2,359.1 L587.1,359.2 L586.2,359.4 L585.3,359.7 L584.7,360.0 L584.3,360.4 L584.1,360.8 L584.2,361.2 L584.4,361.5 L585.0,361.9 L585.7,362.3 L586.6,362.5 L587.6,362.8 L588.8,362.9 L590.0,363.0 L591.2,363.0 L592.4,363.0 L593.5,362.8 L594.5,362.6 L595.3,362.4 L595.9,362.0 L596.3,361.7 Z" stroke-width="0.9" stroke="#e5c27a"/>
<path d="M716.6,366.3 L716.4,365.1 L715.5,363.9 L713.9,362.8 L711.7,361.8 L708.9,360.9 L705.8,360.2 L702.3,359.7 L698.6,359.4 L694.9,359.4 L691.3,359.6 L688.0,360.0 L685.0,360.6 L682.5,361.5 L680.6,362.5 L679.4,363.6 L678.8,364.7 L679.0,366.0 L679.9,367.1 L681.5,368.3 L683.7,369.3 L686.5,370.2 L689.6,370.9 L693.1,371.4 L696.8,371.7 L700.5,371.7 L704.1,371.5 L707.4,371.1 L710.4,370.4 L712.9,369.6 L714.8,368.6 L716.0,367.5 Z" fill="#f3c48a" fill-opacity="0.55" stroke="#d9c7c0" stroke-width="1.3"/>
<path d="M709.9,366.0 L709.8,365.3 L709.2,364.5 L708.2,363.8 L706.7,363.1 L705.0,362.5 L702.9,362.1 L700.7,361.8 L698.3,361.6 L695.9,361.6 L693.6,361.7 L691.4,362.0 L689.5,362.4 L687.9,362.9 L686.7,363.5 L685.9,364.3 L685.5,365.0 L685.6,365.8 L686.2,366.6 L687.2,367.3 L688.7,368.0 L690.4,368.5 L692.5,369.0 L694.7,369.3 L697.1,369.5 L699.5,369.5 L701.8,369.4 L704.0,369.1 L705.9,368.7 L707.5,368.2 L708.7,367.5 L709.5,366.8 Z" fill="#febd10" stroke="#d9c7c0" stroke-width="1.3"/>
<path d="M703.9,365.8 L703.9,365.4 L703.6,365.0 L703.0,364.6 L702.3,364.3 L701.4,364.0 L700.4,363.8 L699.2,363.6 L698.0,363.5 L696.8,363.5 L695.6,363.6 L694.5,363.7 L693.5,363.9 L692.7,364.2 L692.1,364.5 L691.7,364.9 L691.5,365.3 L691.6,365.7 L691.9,366.1 L692.4,366.4 L693.1,366.8 L694.0,367.1 L695.1,367.3 L696.2,367.5 L697.4,367.6 L698.6,367.6 L699.8,367.5 L700.9,367.4 L701.9,367.1 L702.7,366.9 L703.3,366.5 L703.7,366.2 Z" stroke-width="0.9" stroke="#e5c27a"/>
<path d="M824.1,370.9 L823.9,369.6 L823.0,368.4 L821.4,367.3 L819.1,366.3 L816.4,365.4 L813.2,364.7 L809.7,364.2 L806.0,363.9 L802.3,363.9 L798.8,364.1 L795.4,364.5 L792.5,365.2 L790.0,366.0 L788.1,367.0 L786.9,368.1 L786.3,369.3 L786.5,370.5 L787.4,371.7 L789.0,372.8 L791.3,373.8 L794.0,374.7 L797.2,375.4 L800.7,375.9 L804.4,376.2 L808.1,376.2 L811.7,376.0 L815.0,375.6 L818.0,375.0 L820.5,374.1 L822.3,373.1 L823.6,372.0 Z" fill="#f3c48a" fill-opacity="0.55" stroke="#aca6d0" stroke-width="2.3"/>
<path d="M817.4,370.6 L817.3,369.8 L816.7,369.0 L815.6,368.3 L814.2,367.6 L812.4,367.1 L810.4,366.6 L808.1,366.3 L805.7,366.1 L803.4,366.1 L801.0,366.2 L798.9,366.5 L797.0,366.9 L795.4,367.4 L794.2,368.1 L793.4,368.8 L793.0,369.5 L793.2,370.3 L793.7,371.1 L794.8,371.8 L796.2,372.5 L798.0,373.1 L800.1,373.5 L802.3,373.8 L804.7,374.0 L807.1,374.0 L809.4,373.9 L811.5,373.6 L813.5,373.2 L815.1,372.7 L816.3,372.0 L817.1,371.3 Z" fill="#febd10" stroke="#aca6d0" stroke-width="2.6"/>
<path d="M811.4,370.3 L811.4,369.9 L811.1,369.5 L810.5,369.2 L809.8,368.8 L808.9,368.5 L807.8,368.3 L806.7,368.1 L805.5,368.0 L804.3,368.0 L803.1,368.1 L802.0,368.2 L801.0,368.4 L800.2,368.7 L799.6,369.0 L799.2,369.4 L799.0,369.8 L799.1,370.2 L799.4,370.6 L799.9,371.0 L800.6,371.3 L801.5,371.6 L802.6,371.8 L803.7,372.0 L804.9,372.1 L806.2,372.1 L807.3,372.0 L808.4,371.9 L809.4,371.7 L810.2,371.4 L810.9,371.1 L811.3,370.7 Z" stroke-width="0.9" stroke="#e5c27a"/>
<path d="M600.2,416.5 L600.0,415.2 L599.1,414.0 L597.6,412.9 L595.4,411.8 L592.6,410.9 L589.4,410.2 L585.9,409.7 L582.2,409.5 L578.5,409.4 L574.9,409.6 L571.5,410.1 L568.5,410.7 L566.0,411.5 L564.0,412.5 L562.8,413.7 L562.2,414.9 L562.4,416.1 L563.2,417.3 L564.8,418.4 L567.0,419.5 L569.8,420.4 L573.0,421.1 L576.5,421.6 L580.2,421.9 L583.9,421.9 L587.5,421.7 L590.9,421.3 L593.9,420.6 L596.4,419.8 L598.4,418.8 L599.6,417.7 Z" fill="#f3c48a" fill-opacity="0.55" stroke="#aca6d0" stroke-width="2.3"/>
<path d="M593.5,416.2 L593.4,415.4 L592.8,414.6 L591.8,413.9 L590.3,413.2 L588.6,412.6 L586.5,412.2 L584.2,411.8 L581.9,411.7 L579.5,411.6 L577.1,411.8 L574.9,412.0 L573.0,412.5 L571.4,413.0 L570.1,413.6 L569.3,414.4 L568.9,415.1 L569.0,415.9 L569.6,416.7 L570.6,417.5 L572.0,418.1 L573.8,418.7 L575.9,419.2 L578.1,419.5 L580.5,419.7 L582.9,419.7 L585.3,419.6 L587.5,419.3 L589.4,418.9 L591.0,418.3 L592.3,417.7 L593.1,417.0 Z" fill="#febd10" stroke="#aca6d0" stroke-width="2.6"/>
<path d="M587.4,415.9 L587.4,415.5 L587.1,415.1 L586.6,414.7 L585.9,414.4 L584.9,414.1 L583.9,413.9 L582.7,413.7 L581.5,413.6 L580.3,413.6 L579.1,413.7 L578.0,413.8 L577.0,414.0 L576.2,414.3 L575.5,414.6 L575.1,415.0 L574.9,415.4 L575.0,415.8 L575.3,416.2 L575.8,416.6 L576.5,416.9 L577.4,417.2 L578.5,417.5 L579.6,417.6 L580.9,417.7 L582.1,417.7 L583.3,417.7 L584.4,417.5 L585.4,417.3 L586.2,417.0 L586.8,416.7 L587.3,416.3 Z" stroke-width="0.9" stroke="#e5c27a"/>
<path d="M708.5,421.0 L708.3,419.8 L707.4,418.6 L705.8,417.5 L703.6,416.4 L700.8,415.5 L697.6,414.8 L694.1,414.3 L690.4,414.0 L686.7,414.0 L683.1,414.2 L679.7,414.6 L676.7,415.3 L674.2,416.1 L672.3,417.1 L671.0,418.2 L670.4,419.4 L670.6,420.7 L671.5,421.9 L673.1,423.0 L675.3,424.1 L678.1,425.0 L681.3,425.7 L684.8,426.2 L688.5,426.5 L692.3,426.5 L695.9,426.3 L699.3,425.9 L702.3,425.2 L704.8,424.4 L706.7,423.4 L707.9,422.2 Z" fill="#f3c48a" fill-opacity="0.55" stroke="#aca6d0" stroke-width="2.3"/>
<path d="M701.7,420.8 L701.6,420.0 L701.0,419.2 L700.0,418.4 L698.6,417.8 L696.8,417.2 L694.7,416.7 L692.4,416.4 L690.1,416.2 L687.7,416.2 L685.3,416.3 L683.1,416.6 L681.2,417.0 L679.6,417.6 L678.4,418.2 L677.5,418.9 L677.2,419.7 L677.3,420.5 L677.9,421.3 L678.9,422.0 L680.3,422.7 L682.1,423.3 L684.2,423.8 L686.5,424.1 L688.9,424.3 L691.3,424.3 L693.6,424.2 L695.8,423.9 L697.7,423.5 L699.3,422.9 L700.6,422.3 L701.4,421.5 Z" fill="#febd10" stroke="#aca6d0" stroke-width="2.6"/>
<path d="M695.7,420.5 L695.7,420.1 L695.4,419.7 L694.8,419.3 L694.1,419.0 L693.2,418.7 L692.1,418.5 L691.0,418.3 L689.8,418.2 L688.5,418.2 L687.4,418.2 L686.2,418.4 L685.3,418.6 L684.4,418.9 L683.8,419.2 L683.4,419.6 L683.2,420.0 L683.3,420.4 L683.6,420.8 L684.1,421.2 L684.8,421.5 L685.7,421.8 L686.8,422.0 L687.9,422.2 L689.2,422.3 L690.4,422.3 L691.6,422.2 L692.7,422.1 L693.7,421.9 L694.5,421.6 L695.1,421.3 L695.5,420.9 Z" stroke-width="0.9" stroke="#e5c27a"/>
<path d="M816.9,425.6 L816.7,424.4 L815.7,423.2 L814.1,422.0 L811.9,421.0 L809.1,420.1 L805.9,419.4 L802.4,418.9 L798.7,418.6 L794.9,418.6 L791.3,418.8 L788.0,419.2 L785.0,419.9 L782.5,420.7 L780.6,421.7 L779.3,422.8 L778.8,424.0 L779.0,425.3 L779.9,426.5 L781.5,427.6 L783.8,428.7 L786.6,429.6 L789.8,430.3 L793.3,430.8 L797.0,431.1 L800.7,431.1 L804.3,430.9 L807.7,430.5 L810.7,429.8 L813.2,429.0 L815.1,428.0 L816.3,426.8 Z" fill="#f3c48a" fill-opacity="0.55" stroke="#aca6d0" stroke-width="2.3"/>
<path d="M810.1,425.3 L810.0,424.6 L809.4,423.8 L808.3,423.0 L806.9,422.3 L805.1,421.8 L803.0,421.3 L800.8,421.0 L798.4,420.8 L796.0,420.8 L793.6,420.9 L791.5,421.2 L789.5,421.6 L787.9,422.2 L786.7,422.8 L785.9,423.5 L785.5,424.3 L785.7,425.1 L786.3,425.9 L787.3,426.6 L788.8,427.3 L790.6,427.9 L792.6,428.3 L794.9,428.7 L797.3,428.9 L799.7,428.9 L802.0,428.7 L804.2,428.5 L806.1,428.0 L807.8,427.5 L809.0,426.8 L809.8,426.1 Z" fill="#febd10" stroke="#aca6d0" stroke-width="2.6"/>
<path d="M804.1,425.1 L804.0,424.7 L803.7,424.3 L803.2,423.9 L802.5,423.6 L801.5,423.3 L800.5,423.0 L799.3,422.9 L798.1,422.8 L796.9,422.8 L795.7,422.8 L794.6,423.0 L793.6,423.2 L792.8,423.5 L792.2,423.8 L791.7,424.2 L791.6,424.6 L791.6,425.0 L791.9,425.4 L792.5,425.7 L793.2,426.1 L794.1,426.4 L795.2,426.6 L796.3,426.8 L797.6,426.9 L798.8,426.9 L800.0,426.8 L801.1,426.7 L802.1,426.5 L802.9,426.2 L803.5,425.9 L803.9,425.5 Z" stroke-width="0.9" stroke="#e5c27a"/>
<path d="M520.9,385.5 L520.7,384.3 L519.9,383.1 L518.3,381.9 L516.1,380.9 L513.4,380.0 L510.2,379.3 L506.7,378.8 L503.1,378.5 L499.4,378.5 L495.8,378.7 L492.4,379.1 L489.4,379.8 L486.9,380.6 L484.9,381.6 L483.6,382.7 L483.1,383.9 L483.2,385.1 L484.1,386.3 L485.6,387.5 L487.8,388.5 L490.5,389.4 L493.7,390.1 L497.2,390.6 L500.9,390.9 L504.6,390.9 L508.2,390.7 L511.6,390.3 L514.6,389.6 L517.1,388.8 L519.0,387.8 L520.3,386.7 Z" fill="#f3c48a" fill-opacity="0.55" stroke="#aca6d0" stroke-width="2.3"/>
<path d="M514.2,385.2 L514.1,384.4 L513.5,383.6 L512.5,382.9 L511.1,382.2 L509.3,381.7 L507.3,381.2 L505.0,380.9 L502.7,380.7 L500.3,380.7 L498.0,380.8 L495.8,381.1 L493.8,381.5 L492.2,382.1 L491.0,382.7 L490.1,383.4 L489.8,384.2 L489.9,385.0 L490.4,385.7 L491.4,386.5 L492.8,387.1 L494.6,387.7 L496.6,388.2 L498.9,388.5 L501.3,388.7 L503.6,388.7 L506.0,388.6 L508.2,388.3 L510.1,387.9 L511.7,387.3 L513.0,386.7 L513.8,386.0 Z" fill="#febd10" stroke="#aca6d0" stroke-width="2.6"/>
<path d="M508.2,385.0 L508.1,384.6 L507.9,384.2 L507.3,383.8 L506.6,383.4 L505.7,383.2 L504.7,382.9 L503.5,382.8 L502.3,382.7 L501.1,382.7 L499.9,382.7 L498.8,382.9 L497.8,383.1 L497.0,383.4 L496.4,383.7 L495.9,384.0 L495.7,384.4 L495.8,384.8 L496.1,385.2 L496.6,385.6 L497.3,385.9 L498.2,386.2 L499.2,386.5 L500.4,386.6 L501.6,386.7 L502.8,386.7 L504.0,386.7 L505.1,386.5 L506.1,386.3 L506.9,386.0 L507.6,385.7 L508.0,385.3 Z" stroke-width="0.9" stroke="#e5c27a"/>
<path d="M904.5,401.7 L904.3,400.5 L903.4,399.2 L901.7,398.1 L899.5,397.1 L896.7,396.2 L893.5,395.5 L890.0,395.0 L886.3,394.7 L882.6,394.7 L879.0,394.9 L875.7,395.3 L872.7,395.9 L870.2,396.8 L868.3,397.8 L867.1,398.9 L866.6,400.1 L866.8,401.3 L867.7,402.5 L869.4,403.6 L871.6,404.7 L874.4,405.6 L877.6,406.3 L881.1,406.8 L884.8,407.1 L888.5,407.1 L892.1,406.9 L895.5,406.5 L898.4,405.8 L900.9,405.0 L902.8,404.0 L904.0,402.9 Z" fill="#f3c48a" fill-opacity="0.55" stroke="#aca6d0" stroke-width="2.3"/>
<path d="M897.8,401.4 L897.7,400.6 L897.1,399.8 L896.0,399.1 L894.6,398.4 L892.8,397.8 L890.7,397.4 L888.4,397.1 L886.0,396.9 L883.7,396.9 L881.3,397.0 L879.2,397.3 L877.2,397.7 L875.7,398.2 L874.4,398.9 L873.6,399.6 L873.3,400.4 L873.5,401.1 L874.1,401.9 L875.1,402.7 L876.6,403.3 L878.3,403.9 L880.4,404.4 L882.7,404.7 L885.1,404.9 L887.5,404.9 L889.8,404.8 L892.0,404.5 L893.9,404.1 L895.5,403.5 L896.7,402.9 L897.5,402.2 Z" fill="#febd10" stroke="#aca6d0" stroke-width="2.6"/>
<path d="M891.8,401.1 L891.7,400.7 L891.4,400.3 L890.9,400.0 L890.2,399.6 L889.2,399.3 L888.2,399.1 L887.0,398.9 L885.8,398.8 L884.6,398.8 L883.4,398.9 L882.3,399.0 L881.3,399.2 L880.5,399.5 L879.9,399.9 L879.5,400.2 L879.3,400.6 L879.4,401.0 L879.7,401.4 L880.2,401.8 L881.0,402.1 L881.9,402.4 L882.9,402.7 L884.1,402.8 L885.3,402.9 L886.5,402.9 L887.7,402.9 L888.8,402.7 L889.8,402.5 L890.6,402.2 L891.2,401.9 L891.6,401.5 Z" stroke-width="0.9" stroke="#e5c27a"/>
<path d="M594.9,388.6 L594.8,388.0 L594.4,387.4 L593.6,386.9 L592.5,386.4 L591.2,386.0 L589.7,385.6 L588.0,385.4 L586.3,385.3 L584.5,385.2 L582.7,385.3 L581.1,385.6 L579.7,385.9 L578.5,386.3 L577.5,386.7 L576.9,387.3 L576.7,387.8 L576.7,388.4 L577.2,389.0 L577.9,389.6 L579.0,390.1 L580.3,390.5 L581.8,390.8 L583.5,391.1 L585.3,391.2 L587.1,391.2 L588.8,391.1 L590.4,390.9 L591.9,390.6 L593.1,390.2 L594.0,389.7 L594.6,389.2 Z" stroke-width="1.7"/>
<path d="M810.7,397.7 L810.6,397.1 L810.1,396.5 L809.3,396.0 L808.3,395.5 L806.9,395.1 L805.4,394.7 L803.7,394.5 L801.9,394.4 L800.2,394.3 L798.4,394.4 L796.8,394.6 L795.4,395.0 L794.2,395.4 L793.3,395.8 L792.7,396.4 L792.4,396.9 L792.5,397.5 L793.0,398.1 L793.7,398.7 L794.8,399.2 L796.1,399.6 L797.7,399.9 L799.4,400.2 L801.1,400.3 L802.9,400.3 L804.7,400.2 L806.3,400.0 L807.7,399.7 L808.9,399.3 L809.8,398.8 L810.4,398.3 Z" stroke-width="1.7"/>
</g>
<path d="M496,423.2 L512.5,420.2 L512.5,422.6 L577,425.6 L577,427.4 L512.5,425.6 L512.5,427 Z" fill="#c2a462"/>
<path d="M496,423.2 L512.5,420.2 L512.5,422.6 L577,425.6" fill="none" stroke="#dcc894" stroke-width="0.8"/>
<g stroke="#20202a" stroke-width="0.9" fill="none">
<path d="M593,337.6 L585.6,384.4 M809,347.2 L802,393.7"/>
<path d="M591.6,345 L808,354.2"/>
<path d="M592,387.4 L671.2,374.1"/>
<path d="M652.6,381 L650.6,401.5"/>
<path d="M433,380.3 L487,383.6"/>
<path d="M461,403 L492,389"/>
<path d="M852.6,387.3 L933.8,369.9"/>
<path d="M829.3,396.1 L972,390"/>
<path d="M794,396 L933,436.4"/>
<path d="M697.4,393 L811,397.6" stroke="#15153a"/>
</g>
<path d="M591.6,345.0 L602.5,347.2 L602.7,343.8 Z" fill="#20202a"/>
<path d="M808.0,354.2 L797.1,352.0 L796.9,355.4 Z" fill="#20202a"/>
<path d="M652.7,379.2 L649.1,385.4 L655.1,385.9 Z" fill="#20202a"/>
<path d="M650.5,403.2 L654.1,397.0 L648.1,396.5 Z" fill="#20202a"/>
<path d="M592.0,387.4 L604.1,387.0 L603.6,383.8 Z" fill="#20202a"/>
<path d="M486.0,383.5 L471.1,380.8 L470.9,384.4 Z" fill="#15159a"/>
<path d="M489.5,390.2 L475.9,394.1 L477.5,397.8 Z" fill="#20202a"/>
<path d="M897.5,377.7 L881.5,379.3 L882.2,382.8 Z" fill="#20202a"/>
<path d="M876.5,394.1 L860.4,393.0 L860.6,396.6 Z" fill="#20202a"/>
<path d="M833.0,407.3 L819.1,401.4 L818.1,404.9 Z" fill="#20202a"/>
<g stroke="#2020d4" stroke-width="0.9" fill="none">
<path d="M697.4,329.4 L762.9,332.3 L761,395.8"/>
<path d="M701,372 L760.2,374.1"/>
<path d="M697.4,282 L695.6,330 L693.6,389 M697.9,282 L698.7,330 L694.4,389"/>
</g>
<path d="M697.7,268 L700.6,282.2 L694.7,282.2 Z" fill="#2020d4"/>
<path d="M810.9,394.8 L825.5,398.8 L811,400.8 Z" fill="#2020d4"/>
<g font-family="Liberation Sans, sans-serif" fill="none" stroke="#2020d4" stroke-width="0.75">
<text x="0" y="0" font-size="11" text-anchor="middle" transform="translate(697.6,264)" fill="#2020d4" stroke="none">Z</text>
<text x="0" y="0" font-size="11" text-anchor="middle" transform="translate(834,398) rotate(100) scale(0.9,1.1)" fill="#2020d4" stroke="none">Y</text>
<text x="0" y="0" font-size="12" text-anchor="middle" transform="translate(702,348.6) scale(1.75,1.05)" stroke-width="0.5">90</text>
<text x="0" y="0" font-size="12" transform="translate(621,378.4) rotate(-12) skewX(-25) scale(2.7,1.0)" stroke-width="0.4" letter-spacing="1">Φ8</text>
<text x="0" y="0" font-size="12" transform="translate(646,386.4) rotate(172) skewX(20) scale(1.8,0.9)" stroke-width="0.5">14</text>
<text x="0" y="0" transform="translate(446.5,381) rotate(-9) skewX(-38) scale(1.9,0.85)" stroke-width="0.5"><tspan font-size="15">Φ</tspan><tspan font-size="9" dx="1" dy="1.5">1</tspan><tspan font-size="9" dx="2" dy="-3">8</tspan></text>
<text x="0" y="0" transform="translate(441,399.5) rotate(-10) skewX(-38) scale(1.9,0.85)" stroke-width="0.5"><tspan font-size="15">Φ</tspan><tspan font-size="9" dx="1" dy="-2">1</tspan><tspan font-size="9" dx="1" dy="-1">0</tspan></text>
<text x="0" y="0" font-size="12" transform="translate(893,375.6) rotate(-13) skewX(-28) scale(1.5,0.95)" stroke-width="0.55">R50</text>
<text x="0" y="0" font-size="12" transform="translate(939,389.6) rotate(3) skewX(-28) scale(1.5,0.9)" stroke-width="0.55">R35</text>
<text x="0" y="0" font-size="12" transform="translate(920,430) rotate(15) skewX(-28) scale(1.4,0.95)" stroke-width="0.55">R20</text>
</g>
<path d="M692.8,396 L691.7,452" stroke="#2f86d6" stroke-width="2.1" fill="none"/>
<path d="M687.4,450.6 L696,450.6 L691.6,466.4 Z" fill="#3a97e6"/>
<path d="M691.7,450.6 L696,450.6 L691.6,466.4 Z" fill="#1f72c4"/>
<circle cx="693.2" cy="392.7" r="4" fill="#c8a858" stroke="#8a6d2a" stroke-width="0.6"/>
<circle cx="692.2" cy="391.4" r="1.5" fill="#f3e4ae"/>
<path d="M697,454.4 L783,470" stroke="#c9b48c" stroke-width="0.8" fill="none" opacity="0.75"/>
<path d="M898,601.5 h8 M900,605.5 h7 M907,598 v8" stroke="#f2f4f5" stroke-width="1.2" fill="none" opacity="0.8"/>
</g>
</svg>
<!-- floating toolbar -->
<div class="abs" style="left:782px;top:449px;width:208px;height:38px;background:#f1f1f1;border:1px solid #d2d2d2;box-sizing:content-box"></div>
<svg class="abs" style="left:784px;top:451px" width="8" height="36" viewBox="0 0 8 36">
 <g fill="#b4b4b4">
 <rect x="1" y="1.2" width="1.8" height="1.8"/><rect x="4.8" y="1.2" width="1.8" height="1.8"/>
 <rect x="1" y="4.5" width="1.8" height="1.8"/><rect x="4.8" y="4.5" width="1.8" height="1.8"/>
 <rect x="1" y="7.8" width="1.8" height="1.8"/><rect x="4.8" y="7.8" width="1.8" height="1.8"/>
 <rect x="1" y="11.1" width="1.8" height="1.8"/><rect x="4.8" y="11.1" width="1.8" height="1.8"/>
 <rect x="1" y="14.4" width="1.8" height="1.8"/><rect x="4.8" y="14.4" width="1.8" height="1.8"/>
 <rect x="1" y="17.7" width="1.8" height="1.8"/><rect x="4.8" y="17.7" width="1.8" height="1.8"/>
 <rect x="1" y="21" width="1.8" height="1.8"/><rect x="4.8" y="21" width="1.8" height="1.8"/>
 <rect x="1" y="24.3" width="1.8" height="1.8"/><rect x="4.8" y="24.3" width="1.8" height="1.8"/>
 <rect x="1" y="27.6" width="1.8" height="1.8"/><rect x="4.8" y="27.6" width="1.8" height="1.8"/>
 <rect x="1" y="30.9" width="1.8" height="1.8"/><rect x="4.8" y="30.9" width="1.8" height="1.8"/>
 </g>
</svg>
<div class="abs" style="left:800px;top:453px;width:53px;height:30px;border:1px solid #b2b2b2;background:#fff"></div>
<div class="tri" style="left:835px;top:466px"></div>
<svg class="abs" style="left:0;top:0" width="998" height="636" viewBox="0 0 998 636"><g transform="translate(534,186.4)">
  <path d="M272,279.4 L278.4,276 L284.8,279.4 L284.8,285.6 L278.4,289 L272,285.6 Z" fill="#e9e9ec" stroke="#55555f" stroke-width="0.9"/>
  <path d="M272,279.4 L278.4,282.6 L278.4,289 L272,285.6 Z" fill="#f7dfe2"/>
  <path d="M278.4,282.6 L284.8,279.4 L284.8,285.6 L278.4,289 Z" fill="#b9bcc4"/>
  <path d="M272,279.4 L278.4,282.6 L284.8,279.4 M278.4,282.6 L278.4,289" fill="none" stroke="#55555f" stroke-width="0.8"/>
  <path d="M275.2,287 L275.2,281.6 M273.8,283.6 L275.2,281.4 L276.6,284" stroke="#d01822" stroke-width="1.1" fill="none"/>
  <path d="M272,285.8 L278.4,289.4 L284.8,285.8" stroke="#3f78d0" stroke-width="1" fill="none"/>
</g></svg>
<div class="abs" style="left:857px;top:457px;font-size:19px;line-height:28px;color:#1e1e1e;white-space:nowrap">结束</div>
<div class="abs" style="left:896px;top:453px;width:87px;height:29px;border:1px solid #b2b2b2;background:#fff"></div>
<div class="abs" style="left:902px;top:456px;font-size:18px;line-height:26px;color:#1e1e1e">25</div>
<div class="tri" style="left:966px;top:466px"></div>

</body>
</html>
